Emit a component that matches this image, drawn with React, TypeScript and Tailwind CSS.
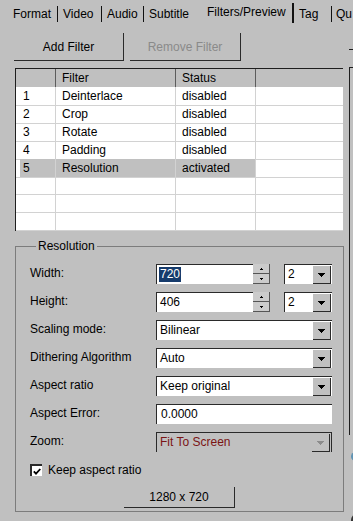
import type { ReactNode } from 'react'

const font = "font-['Liberation_Sans',Arial,sans-serif]"

const filters = [
  { n: '1', name: 'Deinterlace', status: 'disabled' },
  { n: '2', name: 'Crop', status: 'disabled' },
  { n: '3', name: 'Rotate', status: 'disabled' },
  { n: '4', name: 'Padding', status: 'disabled' },
  { n: '5', name: 'Resolution', status: 'activated', selected: true },
  { n: '', name: '', status: '' },
  { n: '', name: '', status: '' },
  { n: '', name: '', status: '' },
]

function Arrow({ color = '#000' }: { color?: string }) {
  return (
    <svg width="7" height="4" viewBox="0 0 7 4" shapeRendering="crispEdges">
      <polygon points="0,0 7,0 3.5,4" fill={color} />
    </svg>
  )
}

function Combo({ value, width = 'w-[176px]', disabled = false }: { value: string; width?: string; disabled?: boolean }) {
  return (
    <div
      className={`${width} shrink-0 h-[20px] flex border-t border-l border-[#2a2a2a] ${disabled ? 'bg-[#c0c0c0] border-r' : 'bg-white'}`}
    >
      <span className={`flex-1 pl-[3px] leading-[19px] ${disabled ? 'text-[#7b1414]' : ''}`}>{value}</span>
      <div className="w-[18px] h-[18px] mt-px mr-px flex items-center justify-center bg-[#c0c0c0] border-r border-b border-[#2a2a2a]">
        <Arrow color={disabled ? '#8c8c8c' : '#000'} />
      </div>
    </div>
  )
}

function Field({ label, children }: { label: string; children: ReactNode }) {
  return (
    <div className="flex items-center h-[20px] shrink-0">
      <span className="w-[126px] shrink-0 pb-[2px]">{label}</span>
      {children}
    </div>
  )
}

function Spin({ value, selected = false }: { value: string; selected?: boolean }) {
  return (
    <div className="flex h-[20px]">
      <div className="w-[97px] h-full bg-white border-t border-l border-[#2a2a2a] pl-[3px] flex items-center">
        <span className={`leading-[15px] ${selected ? 'bg-[#163b6c] text-white px-px -ml-px' : ''}`}>{value}</span>
      </div>
      <div className="w-[17px] h-full flex flex-col bg-[#c0c0c0]">
        <div className="h-[10px] flex items-center justify-center bg-[#cbcbcb] border-r border-b border-[#555]">
          <svg width="3" height="2" viewBox="0 0 3 2" shapeRendering="crispEdges">
            <polygon points="1.5,0 3,2 0,2" fill="#000" />
          </svg>
        </div>
        <div className="h-[10px] flex items-center justify-center bg-[#cbcbcb] border-r border-b border-[#555]">
          <svg width="3" height="2" viewBox="0 0 3 2" shapeRendering="crispEdges">
            <polygon points="0,0 3,0 1.5,2" fill="#000" />
          </svg>
        </div>
      </div>
      <div className="ml-[14px]">
        <Combo value="2" width="w-[48px]" />
      </div>
    </div>
  )
}

export default function App() {
  return (
    <div className={`${font} w-[353px] h-[521px] bg-[#c0c0c0] text-[12px] text-black overflow-hidden flex flex-col`}>
      {/* tab strip */}
      <div className="flex shrink-0 h-[33px] items-start whitespace-nowrap">
        <div className="w-[58px] shrink-0 mt-[6px] h-[16px] leading-[16px] pl-[13px] border-r border-[#111]">Format</div>
        <div className="w-[44px] shrink-0 mt-[6px] h-[16px] leading-[16px] pl-[5px] border-r border-[#111]">Video</div>
        <div className="w-[42px] shrink-0 mt-[6px] h-[16px] leading-[16px] pl-[5px] border-r border-[#111]">Audio</div>
        <div className="w-[57px] shrink-0 mt-[6px] h-[16px] leading-[16px] pl-[5px]">Subtitle</div>
        <div className="w-[93px] shrink-0 mt-[3px] h-[20px] leading-[16px] pt-px pl-[6px] border-r-2 border-[#111]">Filters/Preview</div>
        <div className="w-[38px] shrink-0 mt-[6px] h-[16px] leading-[16px] pl-[5px] border-r border-[#111]">Tag</div>
        <div className="shrink-0 mt-[6px] h-[16px] leading-[16px] pl-[4px]">Qu</div>
      </div>

      <div className="flex flex-1 min-h-0">
        <div className="w-[343px] shrink-0 flex flex-col">
          {/* buttons */}
          <div className="flex shrink-0 gap-[6px] pl-[14px] h-[28px]">
            <button className="w-[110px] h-full border-r border-b border-[#2a2a2a]">Add Filter</button>
            <button className="w-[111px] h-full border-r border-b border-[#2a2a2a] text-[#8a8a8a]">Remove Filter</button>
          </div>

          {/* filter table */}
          <div className="mt-[7px] shrink-0 ml-[15px] w-[328px] border-t border-l border-[#1e1e1e] bg-white">
            <div className="grid grid-cols-[40px_120px_80px_1fr] h-[18px] bg-[#c0c0c0] leading-[18px]">
              <div className="border-r border-[#5c5c5c]" />
              <div className="border-r border-[#5c5c5c] pl-[6px]">Filter</div>
              <div className="border-r border-[#5c5c5c] pl-[6px]">Status</div>
              <div />
            </div>
            {filters.map((f, i) => (
              <div key={i} className="grid grid-cols-[40px_120px_80px_1fr] h-[18px] leading-[17px]">
                <div className="border-r border-b border-[#d2d2d2]">
                  <div className={`ml-[4px] h-full pl-[3px] pt-px ${f.selected ? 'bg-[#c0c0c0]' : ''}`}>{f.n}</div>
                </div>
                <div className={`border-r border-b border-[#d2d2d2] pl-[6px] pt-px ${f.selected ? 'bg-[#c0c0c0]' : ''}`}>{f.name}</div>
                <div className={`border-r border-b border-[#d2d2d2] pl-[6px] pt-px ${f.selected ? 'bg-[#c0c0c0]' : ''}`}>{f.status}</div>
                <div className="border-b border-[#d2d2d2]" />
              </div>
            ))}
          </div>

          {/* resolution group */}
          <fieldset className="mt-[8px] shrink-0 ml-[15px] w-[329px] border border-[#7c7c7c] pl-[14px] pr-[10px] pt-[11px] pb-[3px]">
            <legend className="ml-[6px] px-[2px] leading-[14px]">Resolution</legend>
            <div className="flex flex-col gap-[8px]">
              <Field label="Width:">
                <Spin value="720" selected />
              </Field>
              <Field label="Height:">
                <Spin value="406" />
              </Field>
              <Field label="Scaling mode:">
                <Combo value="Bilinear" />
              </Field>
              <Field label="Dithering Algorithm">
                <Combo value="Auto" />
              </Field>
              <Field label="Aspect ratio">
                <Combo value="Keep original" />
              </Field>
              <Field label="Aspect Error:">
                <div className="w-[176px] h-[20px] bg-white border-t border-l border-[#2a2a2a] pl-[4px] leading-[19px]">0.0000</div>
              </Field>
              <Field label="Zoom:">
                <Combo value="Fit To Screen" disabled />
              </Field>
            </div>
            <label className="mt-[11px] h-[14px] flex items-center gap-[6px]">
              <span className="w-[12px] h-[12px] bg-white border-t-2 border-l-2 border-[#2a2a2a] flex items-center justify-center">
                <svg width="8" height="7" viewBox="0 0 8 7">
                  <path d="M0.8 3.3 L3 5.6 L7.3 1" stroke="#000" strokeWidth="1.8" fill="none" />
                </svg>
              </span>
              <span>Keep aspect ratio</span>
            </label>
            <div className="mt-[10px] flex pl-[94px]">
              <button className="w-[111px] h-[21px] border-r border-b border-[#2a2a2a]">1280 x 720</button>
            </div>
          </fieldset>
        </div>

        {/* partially visible preview panel */}
        <div className="flex-1 flex flex-col overflow-hidden">
          <div className="shrink-0 mt-[16px] ml-[6px] w-[4px] h-px bg-[#1e1e1e]" />
          <div className="shrink-0 mt-[17px] ml-[6px] h-[368px] border-t border-l border-[#1e1e1e]" />
          <div className="shrink-0 mt-[17px] ml-[8px] w-[6px] h-[9px] rounded-l-full border-l-2 border-[#5f93b3]" />
          <div className="shrink-0 mt-[53px] ml-[8px] w-[6px] h-[8px] rounded-tl-full border-l-2 border-t border-[#333]" />
        </div>
      </div>
    </div>
  )
}
